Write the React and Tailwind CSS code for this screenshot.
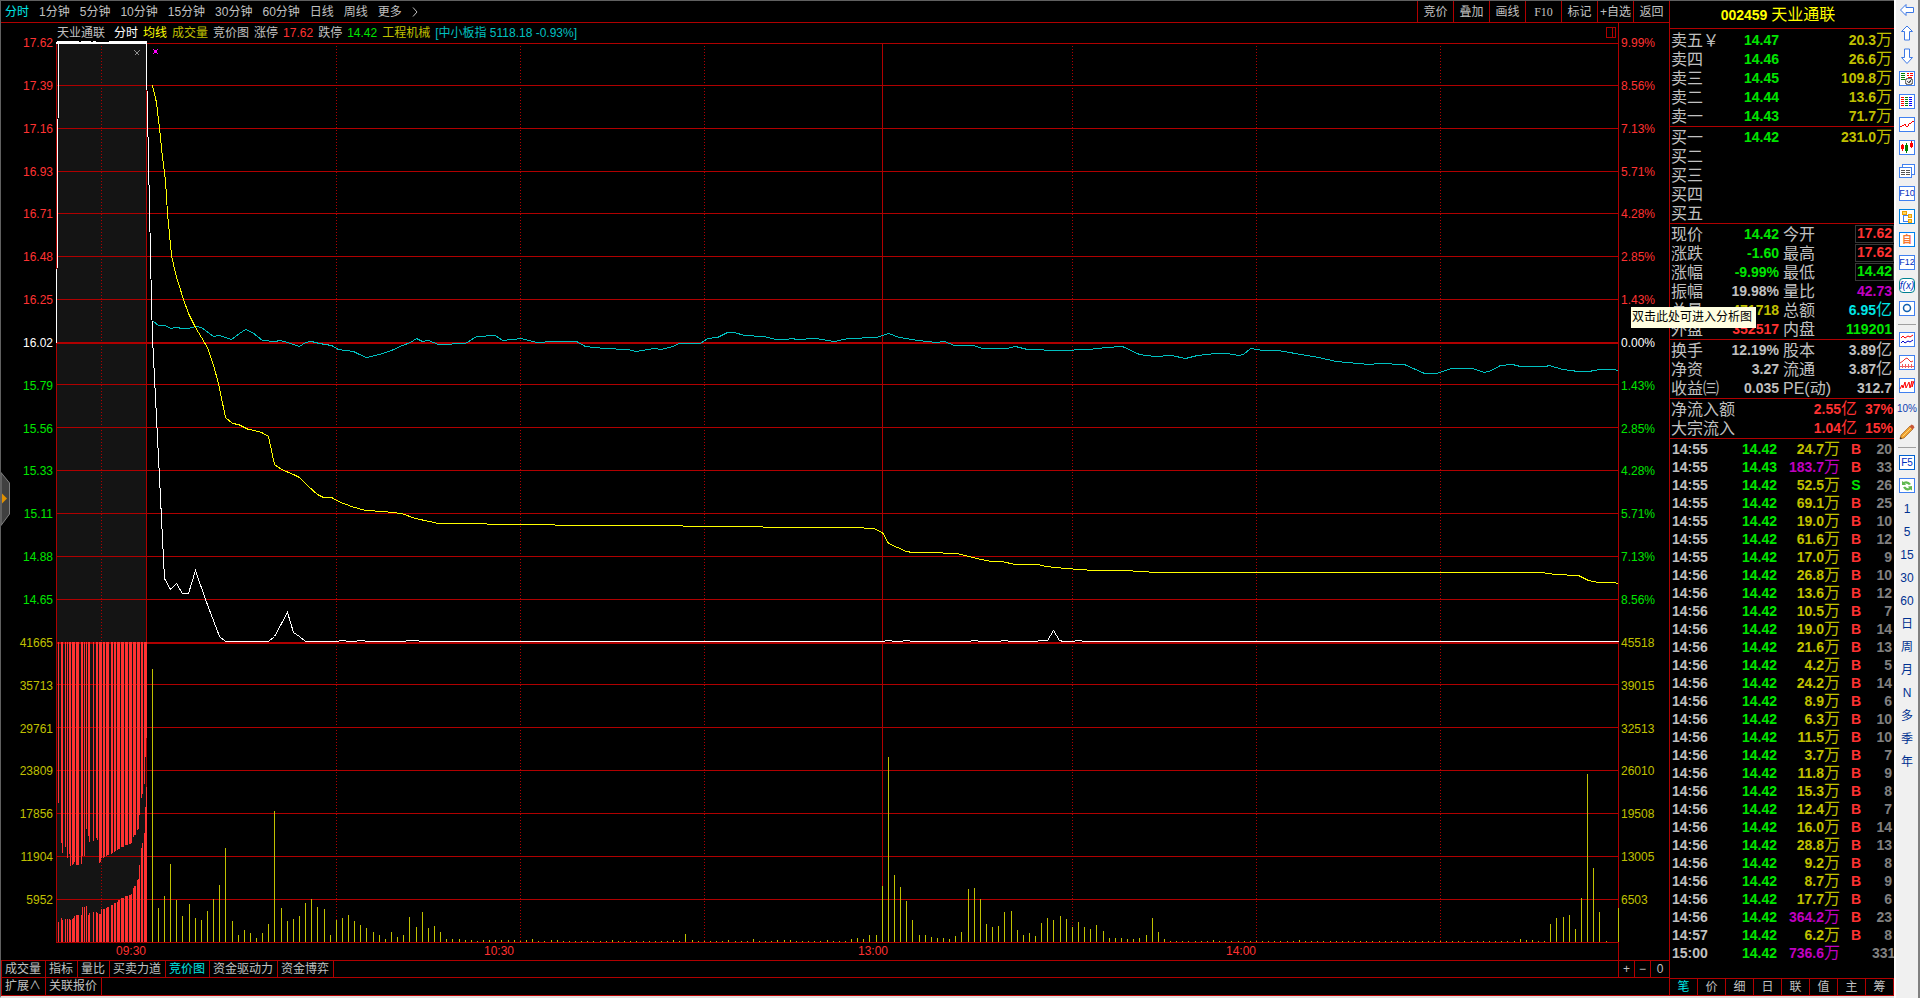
import { Fragment } from 'react';

const periods = ['分时', '1分钟', '5分钟', '10分钟', '15分钟', '30分钟', '60分钟', '日线', '周线', '更多'];
const actions = ['竞价', '叠加', '画线', 'F10', '标记', '+自选', '返回'];
const indicatorTabs = ['成交量', '指标', '量比', '买卖力道', '竞价图', '资金驱动力', '资金博弈'];
const panelTabs = ['笔', '价', '细', '日', '联', '值', '主', '筹'];

const priceLabels = [
  '17.62', '17.39', '17.16', '16.93', '16.71', '16.48', '16.25', '16.02', '15.79', '15.56', '15.33',
  '15.11', '14.88', '14.65', '41665', '35713', '29761', '23809', '17856', '11904', '5952',
];
const percentLabels = [
  '9.99%', '8.56%', '7.13%', '5.71%', '4.28%', '2.85%', '1.43%', '0.00%', '1.43%', '2.85%', '4.28%',
  '5.71%', '7.13%', '8.56%', '45518', '39015', '32513', '26010', '19508', '13005', '6503',
];

const gridLines = [43, 85, 128, 171, 213, 256, 299, 384, 427, 470, 513, 556, 599, 684, 727, 770, 813, 856, 899, 942];

const ones = (n) => Array(n).fill(1);

// one bar per minute, 09:30 - 15:00
const volumes = [
  273, 34, 46, 78, 42, 26, 38, 24, 22, 31, 43, 57, 94, 21, 7, 12, 9, 4, 9, 18, 131, 34, 21, 23, 26, 39, 43, 35, 33, 7,
  22, 24, 27, 21, 17, 14, 10, 7, 3, 10, 5, 7, 25, 15, 30, 14, 16, 10, 3, 3, 3, 2, 2, 1, 2, 2, 2, 2, 2, 2,
  1, 2, 3, 1, 1, 2, 2, ...ones(8), 2, ...ones(9), 2, 1, 8, 2, 1,
  1, 1, 1, 1, 2, 1, 1, 1, 3, 1, 1, 1, 2, 2, 2, ...ones(5), 2, 1, 1, 1, 3, 4, 3, 7, 7, 56,
  185, 67, 55, 41, 22, 7, 7, 5, 4, 4, 3, 6, 10, 53, 54, 43, 18, 15, 16, 30, 31, 12, 7, 9, 6, 19, 24, 22, 26, 23,
  15, 20, 15, 13, 17, 11, 4, 4, 4, 3, 3, 4, 7, 24, 10, 3, ...ones(7), 2, ...ones(13), 2, ...ones(35),
  3, 2, 2, 1, 1, 18, 24, 25, 27, 13, 44, 168, 74, 30, 1, 0, 34,
];

// call auction: x, width, bottom of the upper bar, top of the lower bar
const auction = [
  [58, 1, 803, 922], [61, 1, 843, 918], [62, 1, 853, 920], [65, 1, 847, 919], [67, 1, 858, 919], [69, 1, 854, 919],
  [70, 1, 866, 920], [72, 1, 865, 919], [73, 1, 864, 918], [74, 1, 862, 916], [76, 3, 865, 915], [81, 1, 864, 915],
  [82, 1, 856, 907], [84, 1, 856, 907], [86, 1, 829, 906], [88, 1, 836, 915], [89, 1, 842, 913], [93, 1, 841, 912],
  [96, 1, 838, 912], [97, 1, 840, 913], [99, 1, 863, 914], [100, 1, 862, 914], [101, 1, 858, 909], [103, 1, 858, 909],
  [104, 1, 857, 909], [106, 1, 856, 908], [107, 2, 855, 907], [111, 1, 854, 905], [112, 1, 853, 905], [114, 1, 852, 903],
  [115, 1, 851, 903], [117, 1, 850, 902], [118, 2, 849, 900], [121, 3, 847, 898], [125, 3, 845, 896], [129, 2, 844, 895],
  [131, 1, 843, 894], [133, 1, 837, 888], [134, 2, 835, 886], [137, 1, 830, 880], [138, 1, 829, 879], [139, 1, 815, 865],
  [141, 1, 798, 848], [142, 1, 794, 843], [144, 1, 784, 833], [145, 1, 757, 807], [146, 1, 738, 787],
];

const priceLine =
  '146,43 146,67 147,112 148,160 149,208 150,255 151,302 152,337 164,578 170,589 176,583 182,593 188,593 195,570 205,599 219,636 225,641 268,641 274,636 281,623 287,612 293,632 299,636 305,641 338,641 339,640 345,640 346,641 356,641 357,640 364,640 365,641 405,641 406,640 418,640 419,641 884,641 885,640 891,640 892,641 902,641 903,640 909,640 910,641 970,641 971,640 977,640 978,641 1000,641 1001,640 1007,640 1008,641 1037,641 1038,640 1047,640 1053,630 1059,640 1063,641 1074,641 1075,640 1081,640 1082,641 1618,641';

const averageLine =
  '152,85 156,102 159,128 162,157 165,180 167,213 171,255 175,273 178,283 183,299 188,313 195,327 201,337 207,347 213,365 218,383 225,417 232,423 238,424 248,429 254,430 261,432 268,436 274,464 281,469 293,474 299,477 308,486 317,494 323,497 331,497 338,501 351,506 365,510 383,511 401,513 415,518 429,521 438,523 486,523 487,524 554,524 555,525 682,525 683,526 762,526 763,527 854,527 873,528 882,532 888,543 897,547 906,551 912,552 928,552 957,553 976,558 991,561 1001,561 1015,564 1038,564 1045,566 1065,568 1094,570 1124,570 1156,572 1541,572 1555,574 1578,575 1588,580 1598,582 1613,582 1618,583';

const indexLine =
  '153,321 158,325 165,325 170,328 176,327 182,328 188,328 195,326 201,327 213,336 219,335 231,339 239,333 245,329 252,332 262,340 274,341 280,340 287,342 299,346 305,342 311,341 319,343 331,345 338,349 353,351 359,354 366,357 379,354 391,350 402,345 410,342 416,338 422,341 428,340 438,344 465,343 476,336 495,335 502,340 521,338 536,342 554,341 576,341 585,346 604,348 627,349 636,351 654,348 661,349 672,346 679,343 692,343 700,343 707,338 717,337 727,332 734,332 744,335 763,336 776,339 786,339 791,338 797,339 815,338 834,341 848,338 876,337 888,333 899,337 918,340 936,342 944,341 954,345 973,345 982,348 1006,348 1015,346 1027,349 1060,350 1088,349 1106,347 1122,346 1139,354 1154,356 1171,355 1185,358 1197,355 1215,353 1227,353 1238,355 1243,354 1250,348 1263,350 1278,350 1306,355 1318,357 1336,361 1369,364 1379,363 1404,364 1424,373 1436,373 1451,368 1472,368 1484,372 1491,370 1500,365 1512,364 1520,366 1545,366 1549,365 1562,369 1578,371 1588,371 1600,369 1613,369 1618,370';

const asks = [
  ['卖五', '14.47', '20.3万'],
  ['卖四', '14.46', '26.6万'],
  ['卖三', '14.45', '109.8万'],
  ['卖二', '14.44', '13.6万'],
  ['卖一', '14.43', '71.7万'],
];
const bids = [['买一', '14.42', '231.0万'], ['买二'], ['买三'], ['买四'], ['买五']];

const R = 'text-[#ff3232]';
const G = 'text-[#00e600]';
const Y = 'text-[#c0c000]';
const W = 'text-[#c0c0c0]';
const M = 'text-[#c000c0]';
const C = 'text-[#00e6e6]';

const stats = [
  ['现价', '14.42', G, '今开', '17.62', R, true],
  ['涨跌', '-1.60', G, '最高', '17.62', R, true],
  ['涨幅', '-9.99%', G, '最低', '14.42', G, true],
  ['振幅', '19.98%', W, '量比', '42.73', M],
  ['总量', '471718', Y, '总额', '6.95亿', C],
  ['外盘', '352517', R, '内盘', '119201', G],
];
const fundamentals = [
  ['换手', '12.19%', W, '股本', '3.89亿', W],
  ['净资', '3.27', W, '流通', '3.87亿', W],
  ['收益㈢', '0.035', W, 'PE(动)', '312.7', W],
];

const ticks = [
  ['14:55', '14.42', '24.7万', 'B', '20'],
  ['14:55', '14.43', '183.7万', 'B', '33'],
  ['14:55', '14.42', '52.5万', 'S', '26'],
  ['14:55', '14.42', '69.1万', 'B', '25'],
  ['14:55', '14.42', '19.0万', 'B', '10'],
  ['14:55', '14.42', '61.6万', 'B', '12'],
  ['14:55', '14.42', '17.0万', 'B', '9'],
  ['14:56', '14.42', '26.8万', 'B', '10'],
  ['14:56', '14.42', '13.6万', 'B', '12'],
  ['14:56', '14.42', '10.5万', 'B', '7'],
  ['14:56', '14.42', '19.0万', 'B', '14'],
  ['14:56', '14.42', '21.6万', 'B', '13'],
  ['14:56', '14.42', '4.2万', 'B', '5'],
  ['14:56', '14.42', '24.2万', 'B', '14'],
  ['14:56', '14.42', '8.9万', 'B', '6'],
  ['14:56', '14.42', '6.3万', 'B', '10'],
  ['14:56', '14.42', '11.5万', 'B', '10'],
  ['14:56', '14.42', '3.7万', 'B', '7'],
  ['14:56', '14.42', '11.8万', 'B', '9'],
  ['14:56', '14.42', '15.3万', 'B', '8'],
  ['14:56', '14.42', '12.4万', 'B', '7'],
  ['14:56', '14.42', '16.0万', 'B', '14'],
  ['14:56', '14.42', '28.8万', 'B', '13'],
  ['14:56', '14.42', '9.2万', 'B', '8'],
  ['14:56', '14.42', '8.7万', 'B', '9'],
  ['14:56', '14.42', '17.7万', 'B', '6'],
  ['14:56', '14.42', '364.2万', 'B', '23'],
  ['14:57', '14.42', '6.2万', 'B', '8'],
  ['15:00', '14.42', '736.6万', '', '331'],
];

function labelColor(i) {
  if (i < 7) return 'text-[#ff3232]';
  if (i === 7) return 'text-white';
  if (i < 14) return 'text-[#00e600]';
  return 'text-[#c0c000]';
}

// bold digits, with the unit in the larger regular face
function Num({ value }) {
  const unit = /[万亿]$/.test(value) ? value.slice(-1) : '';
  return (
    <>
      <b className="text-sm leading-none">{unit ? value.slice(0, -1) : value}</b>
      {unit && <span className="text-base leading-none">{unit}</span>}
    </>
  );
}

function AxisLabels({ labels, className }) {
  return (
    <div className={`-mt-[7px] mb-[36px] flex flex-col justify-between ${className}`}>
      {labels.map((label, i) => (
        <span key={i} className={`leading-[14px] ${labelColor(i)}`}>{label}</span>
      ))}
    </div>
  );
}

function Chart() {
  return (
    <svg
      className="h-full min-w-0 flex-1 overflow-visible"
      viewBox="56 43 1563 900"
      preserveAspectRatio="none"
      shapeRendering="crispEdges"
      fill="none"
    >
      <rect x="57" y="44" width="89" height="898" fill="#141414" />
      <g fill="#b00000">
        {gridLines.map((y) => <rect key={y} x="56" y={y} width="1563" height="1" />)}
        <rect x="56" y="342" width="1563" height="2" />
        <rect x="56" y="642" width="1563" height="2" />
        {[56, 146, 882, 1618].map((x) => <rect key={x} x={x} y="43" width="1" height="900" />)}
      </g>
      <g stroke="#b00000" strokeDasharray="1 2">
        {[101, 336, 520, 704, 1072, 1256, 1440].map((x) => (
          <path key={x} d={`M${x + 0.5} 46V942`} />
        ))}
      </g>
      <g fill="#ff3232">
        {auction.map(([x, w, top, bottom]) => (
          <Fragment key={x}>
            <rect x={x} y="642" width={w} height={top - 642} />
            <rect x={x} y={bottom} width={w} height={942 - bottom} />
          </Fragment>
        ))}
      </g>
      <g fill="#c0c000">
        {volumes.map((v, i) => (
          <rect key={i} x={Math.floor(152.3 + i * 6.134)} y={942 - v} width="1" height={v} />
        ))}
      </g>
      <g transform="translate(0.5 0.5)">
        <polyline points={indexLine} stroke="#00c0c0" />
        <polyline points={averageLine} stroke="#ffff00" />
        <polyline points={priceLine} stroke="#ffffff" />
        <path d="M58 43V117M57 118V267M56 268V342" stroke="#ffffff" />
      </g>
      <path d="M57 41h22v1h2v-1h10v1h2v-1h3v1h13v-1h38v3H57z" fill="#ffffff" />
      <path d="M56 42h91v2H56z" fill="#ffffff" />
      <path d="M134.5 50.5l5 5M139.5 50.5l-5 5" stroke="#909090" />
      <path d="M153 49h1v1h3v-1h1v1h-1v3h1v1h-1v-1h-3v1h-1v-1h1v-3h-1z" fill="#ff00ff" />
    </svg>
  );
}

function QuoteTable({ rows }) {
  return (
    <table className="w-full table-fixed border-collapse">
      <tbody>
        {rows.map(([label, price, volume]) => (
          <tr key={label} className="h-[19px]">
            <td className="w-[50px] p-0 pl-px text-base leading-[19px] whitespace-nowrap">
              {label}{label === '卖五' && '￥'}
            </td>
            <td className="w-[60px] p-0 pt-px pr-px text-right leading-[18px] text-[#00e600]">{price && <Num value={price} />}</td>
            <td className="p-0 pt-px pr-0.5 text-right leading-[18px] text-[#c0c000]">{volume && <Num value={volume} />}</td>
          </tr>
        ))}
      </tbody>
    </table>
  );
}

function StatTable({ rows }) {
  return (
    <table className="w-full table-fixed border-collapse">
      <tbody>
        {rows.map(([a, av, ac, b, bv, bc, boxed]) => (
          <tr key={a} className="h-[19px]">
            <td className="w-[50px] p-0 pl-px text-base leading-[19px] whitespace-nowrap">{a}</td>
            <td className={`w-[60px] p-0 pt-px pr-px text-right leading-[18px] ${ac}`}><Num value={av} /></td>
            <td className="w-[48px] p-0 pl-[3px] text-base leading-[19px] whitespace-nowrap">{b}</td>
            <td className={`p-0 text-right whitespace-nowrap ${bc} ${boxed ? 'leading-[19px]' : 'pt-px leading-[18px]'}`}>
              <span className={boxed ? 'inline-block h-[18px] border border-[#383838] px-px align-top leading-4' : 'pr-0.5'}>
                <Num value={bv} />
              </span>
            </td>
          </tr>
        ))}
      </tbody>
    </table>
  );
}

function IconBox({ children, stroke = '#4080f0' }) {
  return (
    <svg className="h-4 w-4" viewBox="0 0 16 16" fill="none" shapeRendering="crispEdges">
      <rect x="0.5" y="0.5" width="15" height="14" fill="#fff" stroke={stroke} />
      {children}
    </svg>
  );
}

function TextIcon({ children, className }) {
  return (
    <span className={`flex h-[15px] w-4 items-center justify-center overflow-hidden border bg-white leading-none ${className}`}>
      {children}
    </span>
  );
}

const tools = [
  ['后退', <svg className="h-4 w-4" viewBox="0 0 16 16" fill="#fff" stroke="#3c78e6"><path d="M1.5 8L7 2.5V5.5H14.5V10.5H7V13.5Z" /></svg>],
  ['上翻', <svg className="h-4 w-4" viewBox="0 0 16 16" fill="#fff" stroke="#3c78e6"><path d="M8 1L13.5 6.5H10.5V15H5.5V6.5H2.5Z" /></svg>],
  ['下翻', <svg className="h-4 w-4" viewBox="0 0 16 16" fill="#fff" stroke="#3c78e6"><path d="M8 15.5L13.5 9.5H10.5V1H5.5V9.5H2.5Z" /></svg>],
  ['报价', (
    <IconBox>
      <path d="M2 2.5h4M2 4.5h4M2 6.5h4M2 8.5h4" stroke="#008000" />
      <path d="M8 2.5h2M11 2.5h3M8 4.5h2M11 4.5h3M9 6.5h4" stroke="#f00" />
      <circle cx="10" cy="10.5" r="3.5" fill="#e8e8e8" stroke="#777" />
      <path d="M8 10l2 2 3-4" stroke="#555" />
    </IconBox>
  )],
  ['列表', (
    <IconBox>
      <path d="M2 3.5h3M2 5.5h3M2 7.5h3M2 9.5h3M2 11.5h3" stroke="#f00" />
      <path d="M6 3.5h3M6 5.5h3M6 7.5h3M6 9.5h3M6 11.5h3" stroke="#008000" />
      <path d="M10 3.5h3M10 5.5h3M10 7.5h3M10 9.5h3M10 11.5h3" stroke="#00f" />
    </IconBox>
  )],
  ['走势', <IconBox><path d="M1 10l2-1 2-1 1-1 1 2h2l1-2 2-1 1-1 2-1" stroke="#f00" /></IconBox>],
  ['K线', (
    <IconBox>
      <path d="M3.5 4v7M12.5 1v7" stroke="#f00" />
      <path d="M2 5h3v4H2zM11 3h3v4h-3z" fill="#f00" />
      <path d="M7.5 3v10" stroke="#008000" />
      <path d="M6 5h3v6H6z" fill="#008000" />
    </IconBox>
  )],
  ['资讯', (
    <svg className="h-4 w-4" viewBox="0 0 16 16" fill="#fff" stroke="#4080f0" shapeRendering="crispEdges">
      <rect x="3.5" y="1.5" width="12" height="10" />
      <rect x="0.5" y="4.5" width="12" height="10" />
      <path d="M2 7.5h4M7 7.5h4M2 9.5h4M7 9.5h4M2 11.5h4M7 11.5h4" stroke="#555" />
    </svg>
  )],
  ['F10', <TextIcon className="border-[#4080f0] text-[9px] text-[#0030c0]">F10</TextIcon>],
  ['板块', (
    <IconBox stroke="#0080e0">
      <path d="M4.5 5v8M5 6.5h4M5 12.5h4" stroke="#4080f0" />
      <path d="M3.5 2.5h4v3h-4zM9.5 5.5h3v3h-3zM9.5 10.5h3v3h-3z" fill="#ffd860" stroke="#f0a000" />
    </IconBox>
  )],
  ['自选', <TextIcon className="border-[#0080f0] text-[10px] font-bold text-[#f87830]">自</TextIcon>],
  ['F12', <TextIcon className="border-[#4080f0] text-[9px] text-[#0030c0]">F12</TextIcon>],
  ['公式', <TextIcon className="rounded-sm border-[#008090] text-[10px] text-[#0030c0] italic">f(x)</TextIcon>],
  ['主页', (
    <IconBox>
      <circle cx="8" cy="7" r="3.5" stroke="#1060b0" shapeRendering="auto" strokeWidth="1.5" />
    </IconBox>
  )],
  null,
  ['叠加', (
    <IconBox>
      <path d="M2 6l2-2 2 2 3-2 2 1 3-2" stroke="#f00" shapeRendering="auto" />
      <path d="M2 11l2-2 2 2 3-2 2 1 3-2" stroke="#00c" shapeRendering="auto" />
    </IconBox>
  )],
  ['分布', (
    <IconBox>
      <path d="M1 8l3-2 2-2 2-1 3 3 1 1 2-1" stroke="#f03030" shapeRendering="auto" />
      <path d="M1 11.5h14M3.5 9v4M6.5 9v4M9.5 9v4M12.5 9v4" stroke="#f06060" />
    </IconBox>
  )],
  ['波动', <IconBox><path d="M1 11l2-4 1 3 2-6 1 6 3-6 1 6 2-7v6l2-6" stroke="#f00" shapeRendering="auto" /></IconBox>],
  ['10%', <span className="text-[10px] leading-4 text-[#1040b0]">10%</span>],
  ['画笔', (
    <svg className="h-4 w-4" viewBox="0 0 16 16">
      <path d="M1 15l1-4L11 2l3 3-9 9z" fill="#f0a030" stroke="#905010" strokeWidth="0.6" />
      <path d="M3.5 12.5L12.5 3.5" stroke="#ffd870" />
      <path d="M10.5 2.5L12.5 0.5Q15 1 15.5 3.5L13.5 5.5z" fill="#c85838" />
      <path d="M1 15l0.5-2 1.5 1.5z" fill="#222" />
    </svg>
  )],
  null,
  ['F5', <TextIcon className="border-[#0060d0] text-[10px] text-[#0030c0]">F5</TextIcon>],
  ['刷新', (
    <IconBox>
      <path d="M3 7V3l1.5 1Q9 2 12 6l-2 1Q8 5 6 5.5L7 7z" fill="#60b850" shapeRendering="auto" />
      <path d="M13 8v4.5l-1.5-1Q7 14 4 9.5l2-1Q8 11 10 10L9 8.5z" fill="#60b850" shapeRendering="auto" />
    </IconBox>
  )],
  ...['1', '5', '15', '30', '60', '日', '周', '月', 'N', '多', '季', '年'].map((t) => [
    t,
    <span className="text-xs leading-4 text-[#003090]">{t}</span>,
  ]),
];

function Toolbar() {
  return (
    <nav className="flex w-[26px] shrink-0 flex-col border-r-2 border-l-2 border-r-[#808080] border-l-white bg-[#f0f0f0]">
      {tools.map((tool, i) =>
        tool ? (
          <button key={i} aria-label={tool[0]} className="flex h-[23px] shrink-0 items-start justify-center pt-0.5">
            {tool[1]}
          </button>
        ) : (
          <hr key={i} className="mx-0.5 mt-0.5 mb-[5px] border-[#a0a0a0]" />
        )
      )}
    </nav>
  );
}

function SidePanel() {
  return (
    <aside className="flex w-[225px] shrink-0 flex-col border-l border-[#b00000] text-[#c0c0c0]">
      <h1 className="flex h-7 shrink-0 items-center justify-center gap-1 border-b border-[#b00000] pr-2 text-[#ffff00]">
        <b className="text-sm leading-none">002459</b>
        <span className="text-base leading-none">天业通联</span>
      </h1>
      <div className="border-b border-[#b00000] pt-0.5">
        <QuoteTable rows={asks} />
      </div>
      <div className="border-b border-[#b00000] pt-px">
        <QuoteTable rows={bids} />
      </div>
      <div className="relative border-b border-[#b00000] pt-px">
        <StatTable rows={stats} />
        <div role="tooltip" className="absolute top-[83px] -left-[39px] bg-[#ffffe1] pr-1 pl-px text-xs leading-[21px] whitespace-nowrap text-black">
          双击此处可进入分析图
        </div>
      </div>
      <div className="border-b border-[#b00000] pt-px">
        <StatTable rows={fundamentals} />
      </div>
      <div className="border-b border-[#b00000] pt-px">
        <table className="w-full table-fixed border-collapse">
          <tbody>
            {[['净流入额', '2.55亿', '37%'], ['大宗流入', '1.04亿', '15%']].map(([label, amount, pct]) => (
              <tr key={label} className="h-[19px]">
                <td className="p-0 pl-px text-base leading-[19px]">{label}</td>
                <td className="p-0 pt-px text-right leading-[18px] text-[#ff3232]"><Num value={amount} /></td>
                <td className="w-[37px] p-0 pt-px pr-px text-right leading-[18px] text-[#ff3232]"><Num value={pct} /></td>
              </tr>
            ))}
          </tbody>
        </table>
      </div>
      <div className="min-h-0 flex-1 overflow-hidden pt-0.5">
        <table className="w-full table-fixed border-collapse">
          <tbody>
            {ticks.map(([time, price, volume, side, count], i) => (
              <tr key={i} className="h-[18px]">
                <td className="w-[46px] p-0 pl-0.5 leading-[18px]"><Num value={time} /></td>
                <td className="w-[61px] p-0 text-right leading-[18px] text-[#00e600]"><Num value={price} /></td>
                <td className={`w-[63px] p-0 text-right leading-[18px] ${parseFloat(volume) > 100 ? 'text-[#c000c0]' : 'text-[#c0c000]'}`}>
                  <Num value={volume} />
                </td>
                <td className={`w-[32px] p-0 text-center leading-[18px] ${side === 'S' ? 'text-[#00e600]' : 'text-[#ff3232]'}`}>
                  <Num value={side} />
                </td>
                <td className="p-0 pr-0.5 text-right leading-[18px] whitespace-nowrap text-[#808080]"><Num value={count} /></td>
              </tr>
            ))}
          </tbody>
        </table>
      </div>
      <div className="grid shrink-0 grid-cols-8 border-y border-[#b00000]">
        {panelTabs.map((t, i) => (
          <button key={t} className={`h-4 border-r border-[#b00000] leading-4 ${i === 0 ? 'text-[#00e6e6]' : ''}`}>{t}</button>
        ))}
      </div>
    </aside>
  );
}

export default function App() {
  return (
    <div className="flex h-screen overflow-hidden bg-black font-['Liberation_Sans','Noto_Sans_CJK_SC',sans-serif] text-xs text-[#c0c0c0]">
      <div className="relative flex min-w-0 flex-1 border-t border-b-2 border-l border-t-[#606060] border-b-[#e0e0e0] border-l-[#606060]">
        <main className="flex min-w-0 flex-1 flex-col">
          <header className="flex h-[22px] shrink-0 justify-between border-b border-[#b00000]">
            <nav className="flex items-center gap-2.5 pl-1 whitespace-nowrap">
              {periods.map((p, i) => (
                <button key={p} className={`leading-4 ${i === 0 ? 'text-[#00e6e6]' : ''}`}>{p}</button>
              ))}
              <svg className="h-2.5 w-1.5" viewBox="0 0 6 10" fill="none" stroke="#c0c0c0">
                <path d="M1 0.5L5 5L1 9.5" />
              </svg>
            </nav>
            <div className="flex">
              {actions.map((a) => (
                <button
                  key={a}
                  className={`w-9 border-l border-[#b00000] whitespace-nowrap ${a === 'F10' ? "font-['Liberation_Serif',serif]" : ''}`}
                >
                  {a}
                </button>
              ))}
            </div>
          </header>

          <div className="flex h-5 shrink-0 justify-between leading-5">
            <div className="flex gap-[5px] pl-14 whitespace-nowrap">
              <span className="mr-1">天业通联</span>
              <span className="text-white">分时</span>
              <span className="text-[#ffff00]">均线</span>
              <span className="text-[#c0c000]">成交量</span>
              <span>竞价图</span>
              <span>涨停</span>
              <span className="text-[#ff3232]">17.62</span>
              <span>跌停</span>
              <span className="text-[#00e600]">14.42</span>
              <span className="text-[#c0c000]">工程机械</span>
              <span className="text-[#00c0c0]">[中小板指 5118.18 -0.93%]</span>
            </div>
            <div className="flex">
              <svg className="mt-1 mr-0.5 h-[11px] w-[10px]" viewBox="0 0 10 11" fill="none" stroke="#b00000" shapeRendering="crispEdges">
                <path d="M0.5 0.5h9v10h-9zM6.5 0v11" />
              </svg>
              <div className="w-[51px] border-l border-[#b00000]" />
            </div>
          </div>

          <div className="flex min-h-0 flex-1">
            <AxisLabels labels={priceLabels} className="w-[55px] pr-[3px] text-right" />
            <Chart />
            <AxisLabels labels={percentLabels} className="w-[50px] pl-0.5" />
          </div>

          <div className="flex h-[18px] shrink-0 border-b border-[#b00000] leading-[17px] text-[#ff3232]">
            <div className="ml-[55px] grid flex-1 grid-cols-[90fr_368fr_374fr_368fr_362fr] text-right">
              <span>09:30</span>
              <span>10:30</span>
              <span>13:00</span>
              <span>14:00</span>
            </div>
            <div className="w-[51px] border-l border-[#b00000]" />
          </div>

          <div className="flex h-[17px] shrink-0 justify-between border-b border-l border-[#b00000]">
            <div className="flex">
              {indicatorTabs.map((t) => (
                <button key={t} className={`border-r border-[#b00000] pr-1 pl-[3px] leading-4 ${t === '竞价图' ? 'text-[#00e6e6]' : ''}`}>{t}</button>
              ))}
            </div>
            <div className="flex">
              <button className="w-4 border-l border-[#b00000] leading-4">+</button>
              <button className="w-4 border-l border-[#b00000] leading-4">−</button>
              <button className="w-[19px] border-l border-[#b00000] leading-4">0</button>
            </div>
          </div>
          <div className="flex h-[18px] shrink-0 border-b border-l border-[#b00000]">
            <button className="border-r border-[#b00000] pr-1 pl-[3px] leading-[17px]">扩展∧</button>
            <button className="border-r border-[#b00000] pr-1 pl-[3px] leading-[17px]">关联报价</button>
          </div>
        </main>
        <SidePanel />
        <button aria-label="展开" className="absolute top-1/2 left-0 -translate-y-1/2">
          <svg className="h-[54px] w-[10px]" viewBox="0 0 10 54">
            <path d="M0 0.5L8.5 11V42L0 53.5z" fill="#404040" stroke="#808080" />
            <path d="M1 21.5L6 26.5L1 31.5z" fill="#e09000" />
          </svg>
        </button>
      </div>
      <Toolbar />
    </div>
  );
}
